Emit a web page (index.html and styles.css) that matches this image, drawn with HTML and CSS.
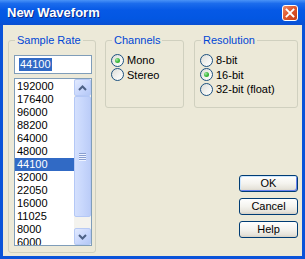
FILE: index.html
```html
<!DOCTYPE html>
<html>
<head>
    <meta charset="UTF-8">
    <meta name="viewport" content="width=device-width, initial-scale=1.0">
    <link rel="stylesheet" href="styles.css">
</head>
<body>
    <div class="window">
        <div class="titlebar">
            <span class="title">New Waveform</span>
            <span class="close">
                <svg width="16" height="16" viewBox="0 0 16 16">
                    <defs>
                        <linearGradient id="closeFill" x1="0" y1="0" x2="1" y2="1">
                            <stop offset="0" stop-color="#f0906c"/>
                            <stop offset="0.45" stop-color="#e0582e"/>
                            <stop offset="1" stop-color="#c23a12"/>
                        </linearGradient>
                    </defs>
                    <rect x="0.5" y="0.5" width="15" height="15" rx="2.5" fill="url(#closeFill)" stroke="#fff"/>
                    <path d="M4.5 4.5l7 7M11.5 4.5l-7 7" stroke="#fff" stroke-width="1.8" stroke-linecap="square"/>
                </svg>
            </span>
        </div>
        <div class="dialog">
            <fieldset class="group rate">
                <legend>Sample Rate</legend>
                <div class="rate-input"><span class="selected-text">44100</span></div>
                <div class="listbox">
                    <ul class="rate-list">
                        <li>192000</li>
                        <li>176400</li>
                        <li>96000</li>
                        <li>88200</li>
                        <li>64000</li>
                        <li>48000</li>
                        <li class="active">44100</li>
                        <li>32000</li>
                        <li>22050</li>
                        <li>16000</li>
                        <li>11025</li>
                        <li>8000</li>
                        <li>6000</li>
                    </ul>
                    <div class="scrollbar">
                        <div class="sb-button">
                            <svg width="9" height="6" viewBox="0 0 9 6"><path d="M1 5l3.5-3.5L8 5" fill="none" stroke="#4d6185" stroke-width="2"/></svg>
                        </div>
                        <div class="sb-track">
                            <div class="sb-thumb">
                                <span class="grip"></span>
                                <span class="grip"></span>
                                <span class="grip"></span>
                                <span class="grip"></span>
                            </div>
                        </div>
                        <div class="sb-button">
                            <svg width="9" height="6" viewBox="0 0 9 6"><path d="M1 1l3.5 3.5L8 1" fill="none" stroke="#4d6185" stroke-width="2"/></svg>
                        </div>
                    </div>
                </div>
            </fieldset>

            <div class="side">
                <div class="groups">
                    <fieldset class="group channels">
                        <legend>Channels</legend>
                        <div class="radio"><span class="radio-box checked"></span>Mono</div>
                        <div class="radio"><span class="radio-box"></span>Stereo</div>
                    </fieldset>
                    <fieldset class="group resolution">
                        <legend>Resolution</legend>
                        <div class="radio"><span class="radio-box"></span>8-bit</div>
                        <div class="radio"><span class="radio-box checked"></span>16-bit</div>
                        <div class="radio"><span class="radio-box"></span>32-bit (float)</div>
                    </fieldset>
                </div>

                <div class="buttons">
                    <button class="btn default">OK</button>
                    <button class="btn">Cancel</button>
                    <button class="btn">Help</button>
                </div>
            </div>
        </div>
    </div>
</body>
</html>
```

FILE: styles.css
```css
* {
    box-sizing: border-box;
}

body {
    margin: 0;
    font-family: "Liberation Sans", Arial, sans-serif;
    font-size: 11px;
    color: #000;
}

.window {
    width: 305px;
    height: 259px;
    display: flex;
    flex-direction: column;
    background-color: #0a53d9;
}

/* caption */
.titlebar {
    height: 25px;
    display: flex;
    align-items: center;
    justify-content: space-between;
    padding: 0 7px 1px 7px;
    background: linear-gradient(180deg, #4a93f7 0%, #1c6cec 14%, #0659e6 40%, #0357e2 75%, #0a4fd2 100%);
}

.title {
    color: #fff;
    font-weight: bold;
    font-size: 13px;
    text-shadow: 1px 1px 0 #0a2a8a;
}

.close {
    display: flex;
    margin-top: 1px;
}

/* body of the dialog */
.dialog {
    flex: 1;
    display: flex;
    gap: 9px;
    margin: 0 3px 3px 3px;
    padding: 9px 4px 0 5px;
    background-color: #ece9d8;
}

.group {
    margin: 0;
    min-width: 0;
    border: 1px solid #d0d0bf;
    border-radius: 3px;
}

.group legend {
    padding: 0 2px;
    margin-left: 1px;
    line-height: 13px;
    color: #0046d5;
}

.rate {
    width: 88px;
    align-self: flex-start;
    padding: 8px 3px 6px 5px;
}

.rate-input {
    height: 19px;
    display: flex;
    align-items: center;
    padding-left: 4px;
    border: 1px solid #7f9db9;
    background-color: #fff;
}

.selected-text {
    line-height: 13px;
    padding: 0 1px;
    color: #fff;
    background-color: #316ac5;
}

.listbox {
    display: flex;
    height: 168px;
    margin-top: 4px;
    border: 1px solid #7f9db9;
    background-color: #fff;
}

.rate-list {
    flex: 1;
    list-style: none;
    margin: 0;
    padding: 1px 0 0 0;
    overflow: hidden;
}

.rate-list li {
    height: 13px;
    line-height: 13px;
    padding-left: 2px;
    white-space: nowrap;
}

.rate-list li.active {
    color: #fff;
    background-color: #316ac5;
}

/* scrollbar */
.scrollbar {
    width: 17px;
    display: flex;
    flex-direction: column;
    background-color: #f4f3ee;
}

.sb-button {
    height: 17px;
    display: flex;
    align-items: center;
    justify-content: center;
    border: 1px solid #b7caf5;
    border-radius: 2px;
    background: linear-gradient(135deg, #e2eafe 0%, #c6d5fc 60%, #b4c8f6 100%);
}

.sb-track {
    flex: 1;
    padding: 0 0 11px 0;
}

.sb-thumb {
    height: 100%;
    display: flex;
    flex-direction: column;
    align-items: center;
    justify-content: center;
    gap: 1px;
    border: 1px solid #b4c8f6;
    border-radius: 2px;
    background: linear-gradient(90deg, #d4e0fd 0%, #c8d7fc 50%, #bccdf8 100%);
}

.grip {
    width: 7px;
    height: 1px;
    background-color: #8a9fd0;
    box-shadow: 0 1px 0 #eef3ff;
}

/* right side */
.side {
    flex: 1;
    display: flex;
    flex-direction: column;
}

.groups {
    display: flex;
    gap: 10px;
}

.channels {
    width: 79px;
    padding: 6px 3px 10px 5px;
}

.resolution {
    flex: 1;
    padding: 6px 3px 10px 5px;
}

.radio {
    height: 14.5px;
    display: flex;
    align-items: center;
    gap: 3px;
    white-space: nowrap;
}

.radio-box {
    width: 13px;
    height: 13px;
    flex: none;
    display: flex;
    align-items: center;
    justify-content: center;
    border: 1px solid #1c5180;
    border-radius: 50%;
    background: linear-gradient(135deg, #dcdcd7 0%, #f4f4f1 60%, #fff 100%);
}

.radio-box.checked::after {
    content: "";
    width: 5px;
    height: 5px;
    border-radius: 50%;
    background: radial-gradient(circle at 35% 35%, #a8e8a8 0%, #3fbb3f 50%, #1a9a1a 100%);
}

.buttons {
    align-self: flex-end;
    display: flex;
    flex-direction: column;
    gap: 6px;
    margin-top: 67px;
}

.btn {
    width: 59px;
    height: 17px;
    padding: 0;
    font-family: "Liberation Sans", Arial, sans-serif;
    font-size: 11px;
    color: #000;
    border: 1px solid #003c74;
    border-radius: 3px;
    background: linear-gradient(180deg, #fff 0%, #f4f3ee 50%, #e6e3da 85%, #d6d0c5 100%);
}

.btn.default {
    box-shadow: inset 1px 1px 0 #cee7ff, inset -1px -1px 0 #6982ee;
}
```
